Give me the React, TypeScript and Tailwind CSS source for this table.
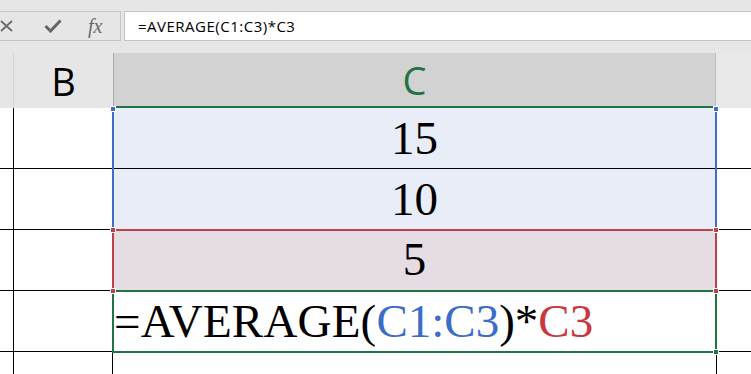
import React from "react";

const ui = { fontFamily: '"Open Sans", "Noto Sans", Arial, sans-serif' };
const serif = { fontFamily: '"Liberation Serif", "Times New Roman", serif' };

function Handle({ x, y, color }: { x: number; y: number; color: string }) {
  return (
    <div
      className="absolute w-[6px] h-[6px] border border-white"
      style={{ left: x - 3, top: y - 3, backgroundColor: color }}
    />
  );
}

function Row({
  h,
  bg,
  line = "border-b border-black",
  children,
  align = "justify-center",
  pb = "pb-[6px]",
}: {
  h: string;
  bg: string;
  line?: string;
  children?: React.ReactNode;
  align?: string;
  pb?: string;
}) {
  return (
    <div className={`flex ${h} ${line}`}>
      <div className="w-[14px] shrink-0 border-r border-black" />
      <div className="w-[99px] shrink-0 border-r border-black" />
      <div
        className={`w-[603px] shrink-0 flex items-end ${align} ${pb} ${bg} text-[47px] leading-none text-black`}
        style={serif}
      >
        {children}
      </div>
      <div className="flex-1 border-l border-black" />
    </div>
  );
}

export default function App() {
  return (
    <div className="relative w-[751px] h-[374px] overflow-hidden bg-white" style={ui}>
      {/* formula bar */}
      <div className="h-[53px] bg-[#e6e6e6] flex items-start pt-[11px]">
        <div className="-ml-[10px] w-[131px] h-[30px] border border-[#c6c6c6] flex items-center shrink-0">
          <svg width="14" height="12" viewBox="0 0 14 12" className="ml-[9px]">
            <path d="M1 1 L12 11 M12 1 L1 11" stroke="#6b6b6b" strokeWidth="1.8" fill="none" />
          </svg>
          <svg width="18" height="14" viewBox="0 0 18 14" className="ml-[30px]">
            <path d="M1.5 7 L6.5 12 L16.5 1.5" stroke="#666666" strokeWidth="3" fill="none" />
          </svg>
          <span
            className="ml-[26px] text-[20px] italic text-[#6a6a6a] leading-none"
            style={serif}
          >
            fx
          </span>
        </div>
        <div className="ml-[3px] flex-1 h-[30px] bg-white border border-[#c6c6c6] border-r-0 flex items-center pl-[13px] text-[15px] tracking-[0.5px] text-black">
          =AVERAGE(C1:C3)*C3
        </div>
      </div>

      {/* column headers */}
      <div className="flex h-[55px] bg-[#e6e6e6] text-[38px] leading-none">
        <div className="w-[14px] shrink-0 border-r border-[#d4d4d4]" />
        <div className="w-[99px] shrink-0 flex items-center justify-center text-black">B</div>
        <div className="w-[603px] shrink-0 bg-[#d2d2d2] border-l border-[#a8a8a8] border-r border-r-[#bdbdbd] border-b-2 border-b-[#217346] flex items-center justify-center text-[#217346]">
          C
        </div>
        <div className="flex-1 bg-[#e8e8e8]" />
      </div>

      {/* rows */}
      <Row h="h-[61px]" bg="bg-[#e8edf8]" pb="pb-[6px]">15</Row>
      <Row h="h-[61px]" bg="bg-[#e8edf8]" pb="pb-[6px]">10</Row>
      <Row h="h-[61px]" bg="bg-[#e5dce4]" pb="pb-[7px]">5</Row>
      <Row h="h-[61px]" bg="bg-white" align="justify-start pl-[1px]" pb="pb-[6px]">
        <span className="tracking-[0.2px]">=AVERAGE(</span>
        <span className="text-[#3a6cc8]">C1:C3</span>
        <span>)*</span>
        <span className="text-[#c8383c]">C3</span>
      </Row>
      <Row h="h-[30px]" bg="bg-white" />

      {/* reference range outlines */}
      <div className="absolute left-[112px] top-[108px] w-[605px] h-[123px] border-x-2 border-[#3d6ec8]" />
      <div className="absolute left-[112px] top-[229px] w-[605px] h-[63px] border-2 border-[#bd4149]" />
      <div className="absolute left-[112px] top-[290px] w-[605px] h-[63px] border-2 border-[#217346]" />

      <Handle x={113} y={109} color="#3d6ec8" />
      <Handle x={716} y={109} color="#3d6ec8" />
      <Handle x={113} y={230} color="#bd4149" />
      <Handle x={716} y={230} color="#bd4149" />
      <Handle x={113} y={291} color="#bd4149" />
      <Handle x={716} y={291} color="#bd4149" />
      <Handle x={716} y={352} color="#217346" />
    </div>
  );
}
